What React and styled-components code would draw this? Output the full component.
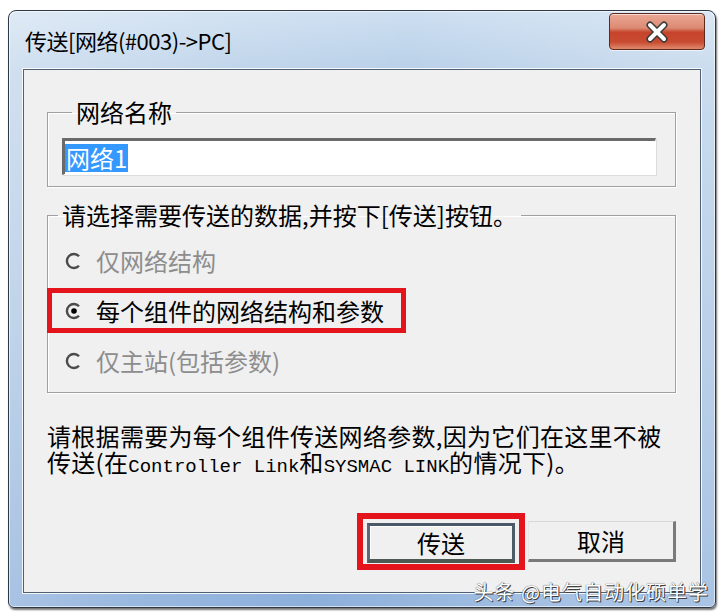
import React from 'react'
import styled, { createGlobalStyle } from 'styled-components'

const GlobalStyle = createGlobalStyle`
  html, body {
    margin: 0;
    padding: 0;
    background: #fff;
  }
  body {
    width: 726px;
    height: 616px;
    overflow: hidden;
    font-family: "Noto Sans CJK SC", "Noto Sans", sans-serif;
  }
`

const Window = styled.div`
  position: relative;
  box-sizing: border-box;
  width: 708px;
  height: 598px;
  margin: 10px 0 0 8px;
  display: flex;
  flex-direction: column;
  border: 1px solid #2d3843;
  border-radius: 8px 8px 6px 6px;
  background:
    linear-gradient(100deg, rgba(255,255,255,.35) 0%, rgba(255,255,255,.1) 30%, rgba(255,255,255,0) 50%, rgba(255,255,255,.25) 85%),
    linear-gradient(180deg, #cddff1 0%, #b9d0e8 10%, #a5c1e1 55%, #8cafdb 100%);
  box-shadow: inset 0 0 0 1px rgba(255,255,255,.6), 1px 2px 2px rgba(0,0,0,.55);
`

const TitleBar = styled.div`
  display: flex;
  justify-content: space-between;
  align-items: flex-start;
  height: 58px;
  padding-left: 16px;
`

const Title = styled.div`
  font-size: 22px;
  line-height: 58px;
  color: #000;
  letter-spacing: -0.5px;
`

const CloseButton = styled.div`
  box-sizing: border-box;
  width: 96px;
  height: 37px;
  margin: 2px 10px 0 0;
  display: flex;
  align-items: center;
  justify-content: center;
  border: 1px solid #5e2a1f;
  border-radius: 4px;
  background: linear-gradient(180deg, #eaa896 0%, #dc8a73 40%, #c6442b 52%, #c84b31 80%, #e08a6c 100%);
  box-shadow: inset 0 1px 0 rgba(255,255,255,.55), 0 1px 0 rgba(255,255,255,.6);
`

const Client = styled.div`
  flex: 1;
  display: flex;
  flex-direction: column;
  margin: 0 14px 14px 14px;
  padding: 27px 24px 0 23px;
  border: 1px solid #4f6072;
  background: #f0f0f0;
  box-shadow: 0 0 0 1px rgba(255,255,255,.85);
`

const Group = styled.fieldset`
  margin: ${p => p.$gap}px 0 0 0;
  padding: ${p => p.$pad};
  border: 1px solid #a0a0a0;
  box-shadow: inset 1px 1px 0 #fff, 1px 1px 0 #fff;
  min-width: 0;
`

const Legend = styled.legend`
  margin-left: 10px;
  padding: 0 4px;
  font-size: 24px;
  line-height: 30px;
  color: #000;
`

const Field = styled.div`
  box-sizing: border-box;
  height: 37px;
  display: flex;
  align-items: center;
  background: #fff;
  border-top: 3px solid #6a6a6a;
  border-left: 3px solid #6a6a6a;
  border-right: 1px solid #fff;
  border-bottom: 1px solid #fff;
  box-shadow: 1px 1px 0 #dcdcdc;
`

const Selected = styled.span`
  background: #3399ff;
  color: #fff;
  font-size: 24px;
  line-height: 28px;
  padding: 0 1px;
`

const RadioList = styled.div`
  display: flex;
  flex-direction: column;
  align-items: flex-start;
  gap: 5px;
`

const RadioRow = styled.div`
  box-sizing: border-box;
  height: 45px;
  display: flex;
  align-items: center;
  gap: 13px;
  margin-left: -1px;
  padding: 0 17px 0 13px;
  border: 5px solid ${p => (p.$marked ? '#e4141c' : 'transparent')};
  font-size: 24px;
  color: ${p => (p.$disabled ? '#8d8d8d' : '#000')};
`

const RadioIcon = styled.svg`
  flex-shrink: 0;
  width: 18px;
  height: 18px;
`

const Note = styled.p`
  margin: 30px 0 0 0;
  font-size: 24px;
  line-height: 26px;
  color: #000;
  letter-spacing: 0.3px;
`

const Latin = styled.span`
  font-family: "Liberation Mono", monospace;
  font-size: 19px;
  line-height: 20px;
  letter-spacing: 0;
`

const ButtonRow = styled.div`
  display: flex;
  justify-content: flex-end;
  align-items: center;
  gap: 3px;
  margin-top: 36px;
`

const Mark = styled.div`
  display: flex;
  padding: 4px 4px 1px 4px;
  border: 6px solid #e4141c;
`

const Button = styled.div`
  box-sizing: border-box;
  width: 148px;
  height: ${p => (p.$default ? 40 : 41)}px;
  display: flex;
  align-items: center;
  justify-content: center;
  font-size: 24px;
  color: #000;
  background: #f0f0f0;
  border-style: solid;
  border-width: ${p => (p.$default ? '3px 3px 4px 3px' : '1px 3px 3px 1px')};
  border-color: ${p =>
    p.$default
      ? '#4a5868 #4e5c6a #4d5a52 #5a6878'
      : '#d8d8d8 #7a7a7a #7a7a7a #e6e6e6'};
  box-shadow: ${p => (p.$default ? 'inset 1px 1px 0 #fff' : 'none')};
`

const Watermark = styled.div`
  position: absolute;
  right: 6px;
  bottom: 3px;
  font-size: 20px;
  line-height: 24px;
  letter-spacing: 1px;
  color: #fff;
  text-shadow: 0 0 1px #222, 1px 1px 0 #444;
`

const RadioMark = ({ checked }) => (
  <RadioIcon viewBox="0 0 18 18">
    <path d="M14 4.2 A7 7 0 1 0 14 13.8" fill="none" stroke="#4a4a4a" strokeWidth="2.4" />
    {checked && <circle cx="9" cy="9" r="2.8" fill="#000" />}
  </RadioIcon>
)

const CloseGlyph = () => (
  <svg width="26" height="22" viewBox="0 0 26 22">
    <path d="M6 4 L20 18 M20 4 L6 18" stroke="#3a3a3a" strokeWidth="7" strokeLinecap="round" />
    <path d="M6 4 L20 18 M20 4 L6 18" stroke="#fff" strokeWidth="4" strokeLinecap="round" />
  </svg>
)

const options = [
  { label: '仅网络结构', disabled: true },
  { label: '每个组件的网络结构和参数', checked: true, marked: true },
  { label: '仅主站(包括参数)', disabled: true },
]

export default function App() {
  return (
    <>
      <GlobalStyle />
      <Window>
        <TitleBar>
          <Title>传送[网络(#003)-&gt;PC]</Title>
          <CloseButton>
            <CloseGlyph />
          </CloseButton>
        </TitleBar>
        <Client>
          <Group $gap={0} $pad="11px 19px 11px 14px">
            <Legend>网络名称</Legend>
            <Field>
              <Selected>网络1</Selected>
            </Field>
          </Group>
          <Group $gap={13} $pad="8px 0 9px 0">
            <Legend>请选择需要传送的数据,并按下[传送]按钮。</Legend>
            <RadioList>
              {options.map(o => (
                <RadioRow key={o.label} $marked={o.marked} $disabled={o.disabled}>
                  <RadioMark checked={o.checked} />
                  {o.label}
                </RadioRow>
              ))}
            </RadioList>
          </Group>
          <Note>
            请根据需要为每个组件传送网络参数,因为它们在这里不被
            <br />
            传送(在<Latin>Controller Link</Latin>和<Latin>SYSMAC LINK</Latin>的情况下)。
          </Note>
          <ButtonRow>
            <Mark>
              <Button $default>传送</Button>
            </Mark>
            <Button>取消</Button>
          </ButtonRow>
        </Client>
        <Watermark>头条 @电气自动化硕单学</Watermark>
      </Window>
    </>
  )
}
